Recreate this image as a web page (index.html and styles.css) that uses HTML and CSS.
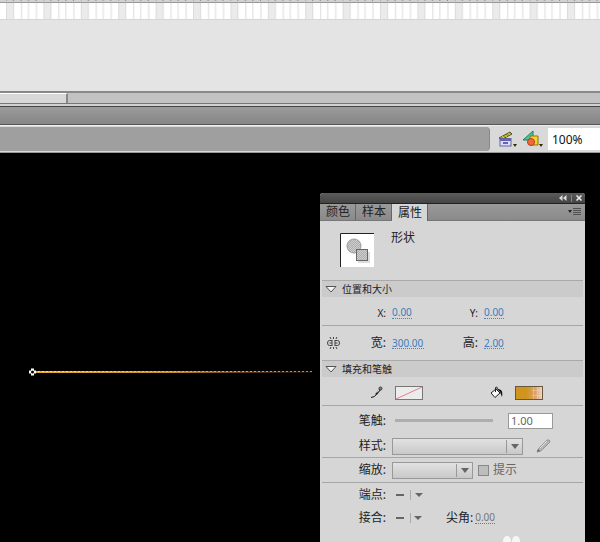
FILE: index.html
```html
<!DOCTYPE html>
<html lang="zh-CN">
<head>
<meta charset="utf-8">
<title>属性</title>
<link rel="stylesheet" href="styles.css">
</head>
<body>
<div class="timeline">
  <svg class="frames" aria-hidden="true">
    <defs>
      <pattern id="cells" width="37.4" height="20" patternUnits="userSpaceOnUse" x="6">
        <rect width="38" height="20" fill="#fff"/>
        <rect y="2" width="8" height="18" fill="#ebebeb"/>
        <path d="M.5 3v17M7.5 3v17M15.5 3v17M22.5 3v17M30.5 3v17" stroke="#dcdcdc"/>
        <rect width="38" height="2" fill="#d2d2d2"/>
        <path d="M0 0v1M7.5 0v1M15 0v1M22.5 0v1M30 0v1" stroke="#888"/>
        <path d="M0 2.5h38" stroke="#999"/>
        <path d="M0 19.5h38" stroke="#d6d6d6"/>
      </pattern>
    </defs>
    <rect width="100%" height="20" fill="url(#cells)"/>
  </svg>
</div>
<div class="scrollbar"><div class="scroll-thumb"></div></div>
<div class="titlebar"></div>
<div class="editbar">
  <div class="crumbs"></div>
  <button class="tool" aria-label="编辑场景">
    <svg width="20" height="18" viewBox="0 0 20 18">
      <path d="M1 8L12 2l2 2L3 10z" fill="#a8a82c" stroke="#55551c"/>
      <path d="M4 6l2 2M7 5l2 2M10 3l2 2" stroke="#c9c648"/>
      <rect x="2" y="8.500" width="11" height="7.500" fill="#dcdcfa" stroke="#6464a8"/>
      <path d="M2 10h11M5 13h5" stroke="#6464a8" stroke-width="2"/>
      <path d="M15 14h4l-2 3z" fill="#332b00"/>
    </svg>
  </button>
  <button class="tool" aria-label="编辑元件">
    <svg width="22" height="18" viewBox="0 0 22 18">
      <path d="M1 10L11 1v9z" fill="#45c79b" stroke="#237a68"/>
      <path d="M8 6h8v9H8z" fill="#eed62c" stroke="#8d7510"/>
      <circle cx="9" cy="12" r="3.500" fill="#f26a35" stroke="#b33d20"/>
      <path d="M17 14h4l-2 3z" fill="#332b00"/>
    </svg>
  </button>
  <input class="zoom" aria-label="缩放比例" value="100%">
</div>

<main class="stage">
  <svg class="shape" width="290" height="12" viewBox="0 0 290 12" aria-hidden="true">
    <defs>
      <linearGradient id="gold" gradientUnits="userSpaceOnUse" x1="6" y1="0" x2="286" y2="0">
        <stop offset="0" stop-color="#e8ab28"/><stop offset=".5" stop-color="#c98c28"/><stop offset="1" stop-color="#7a3a1c" stop-opacity=".2"/>
      </linearGradient>
      <linearGradient id="dots" gradientUnits="userSpaceOnUse" x1="6" y1="0" x2="286" y2="0">
        <stop offset="0" stop-color="#ffe690"/><stop offset="1" stop-color="#b58b70"/>
      </linearGradient>
    </defs>
    <rect x="6" y="5" width="279" height="2" fill="url(#gold)"/>
    <path d="M7 5.500h278" stroke="url(#dots)" stroke-dasharray="2 2"/>
    <path d="M2 6h7M5.500 2.500v7" stroke="#fff" stroke-width="3"/>
    <circle cx="5.500" cy="6" r="1.500" fill="#000"/>
  </svg>

  <section class="panel">
    <header class="panel-head">
      <button aria-label="折叠"><svg width="8" height="6" viewBox="0 0 8 6"><path d="M3.500 0v6L0 3zM7.500 0v6L4 3z" fill="#ddd"/></svg></button>
      <span class="divider"></span>
      <button aria-label="关闭"><svg width="6" height="6" viewBox="0 0 6 6"><path d="M.5.5l5 5M5.500.5l-5 5" stroke="#eee" stroke-width="1.500"/></svg></button>
    </header>
    <nav class="tabs">
      <button class="tab">颜色</button>
      <button class="tab">样本</button>
      <button class="tab active">属性</button>
      <button class="menu" aria-label="面板菜单"><svg width="13" height="8" viewBox="0 0 13 8"><path d="M0 2h4L2 5z" fill="#222"/><path d="M5 .5h8M5 2.500h8M5 4.500h8M5 6.500h8" stroke="#505050"/></svg></button>
    </nav>

    <div class="object">
      <svg class="thumb" width="34" height="34" viewBox="0 0 34 34" aria-hidden="true">
        <defs><pattern id="hatch" width="2" height="2" patternUnits="userSpaceOnUse"><rect width="2" height="2" fill="#cecece"/><path d="M0 0h1v1H0zM1 1h1v1H1z" fill="#adadad"/></pattern></defs>
        <rect width="34" height="34" fill="#fff"/>
        <path d="M.5 34V.5H34" fill="none" stroke="#222"/>
        <path d="M18 28v2h12V19h-2" fill="#ddd"/>
        <circle cx="14" cy="13" r="7" fill="url(#hatch)" stroke="#999"/>
        <rect x="16.500" y="16.500" width="11" height="11" fill="url(#hatch)" stroke="#666"/>
      </svg>
      <span>形状</span>
    </div>

    <h2 class="section"><svg width="12" height="7" viewBox="0 0 12 7"><path d="M1 .5h10L6 6z" fill="#f4f4f4" stroke="#555"/></svg>位置和大小</h2>
    <div class="row ruled values">
      <label class="name small" for="x">X:</label><input class="hot" id="x" value="0.00">
      <label class="name small" for="y">Y:</label><input class="hot" id="y" value="0.00">
    </div>
    <div class="row tall">
      <button class="link" aria-label="锁定宽高"><svg width="13" height="12" viewBox="0 0 13 12"><g fill="none" stroke="#444"><path d="M5 3.500H2.500q-2 0-2 2.500t2 2.500H5M8 3.500h2.500q2 0 2 2.500t-2 2.500H8M5 3v6M8 3v6M2.500 6H5M8 6h2.500"/><path d="M3 0l1 2M6.500 0v2M10 0L9 2M3 12l1-2M6.500 12v-2M10 12l-1-2"/></g></svg></button>
      <label class="name" for="w">宽:</label><input class="hot" id="w" value="300.00">
      <label class="name" for="h">高:</label><input class="hot" id="h" value="2.00">
    </div>

    <h2 class="section"><svg width="12" height="7" viewBox="0 0 12 7"><path d="M1 .5h10L6 6z" fill="#f4f4f4" stroke="#555"/></svg>填充和笔触</h2>
    <div class="row ruled values">
      <svg class="name-icon" width="13" height="13" viewBox="0 0 13 13" aria-hidden="true"><path d="M1 11.500q4 0 6-4" fill="none" stroke="#111"/><path d="M6 8.500l4-5" stroke="#222" stroke-width="2"/><path d="M7 6.500L9.500 3.500" stroke="#eee"/><circle cx="10.500" cy="2.500" r="1.500" fill="#888" stroke="#333"/></svg>
      <button class="swatch" aria-label="笔触颜色"><svg width="28" height="14" viewBox="0 0 28 14"><rect x=".5" y=".5" width="27" height="13" fill="#ececec" stroke="#777"/><path d="M1 13L27 1" stroke="#e2808a"/></svg></button>
      <svg class="name-icon" width="13" height="13" viewBox="0 0 13 13" aria-hidden="true"><path d="M1 7l5-4 4 4-5 4.500z" fill="#fafafa" stroke="#222"/><path d="M5.500 6V1.500q1.500-1.500 2 1" fill="none" stroke="#222"/><path d="M6 2l5 2q2 2 1 7l-2-5z" fill="#111"/></svg>
      <button class="swatch" aria-label="填充颜色"><svg width="28" height="14" viewBox="0 0 28 14">
        <defs><linearGradient id="fill"><stop offset=".4" stop-color="#cf951f"/><stop offset=".75" stop-color="#dda36e"/><stop offset="1" stop-color="#eddad6"/></linearGradient></defs>
        <rect x=".5" y=".5" width="27" height="13" fill="url(#fill)" stroke="#665838"/><path d="M17 4.500h10M17 9.500h10M18.500 1v12M22.500 1v12" stroke="#f7e4dc" opacity=".35"/></svg></button>
    </div>

    <div class="row">
      <label class="name" for="stroke">笔触:</label>
      <input class="slider" id="stroke" type="range" min="0" max="200" value="1">
      <input class="box" aria-label="笔触大小" value="1.00">
    </div>
    <div class="row ruled short">
      <label class="name" for="style">样式:</label>
      <span class="drop wide"><select id="style"><option></option></select></span>
      <button class="edit" aria-label="编辑笔触样式"><svg width="15" height="14" viewBox="0 0 15 14"><path d="M1 13l2-4 8-8q3-1 3 2l-9 9z" fill="#b3b3b3" stroke="#999"/><path d="M4 9l7-7" stroke="#e6e6e6"/><path d="M1 13l3-1-2-2z" fill="#666"/></svg></button>
    </div>
    <div class="row ruled medium">
      <label class="name" for="scale">缩放:</label>
      <span class="drop"><select id="scale"><option></option></select></span>
      <label class="hint"><input type="checkbox">提示</label>
    </div>
    <div class="row short">
      <span class="name">端点:</span>
      <button class="mini" aria-label="端点"><svg width="28" height="10" viewBox="0 0 28 10"><path d="M0 5h8" stroke="#666" stroke-width="2"/><path d="M14.500 0v10" stroke="#aaa"/><path d="M19 3h8l-4 4z" fill="#666"/></svg></button>
    </div>
    <div class="row short">
      <span class="name">接合:</span>
      <button class="mini" aria-label="接合"><svg width="28" height="10" viewBox="0 0 28 10"><path d="M0 5h8" stroke="#666" stroke-width="2"/><path d="M14.500 0v10" stroke="#aaa"/><path d="M18 3h8l-4 4z" fill="#666"/></svg></button>
      <label class="miter" for="miter">尖角:</label><input class="hot muted" id="miter" value="0.00">
    </div>
    <svg class="mark" width="20" height="10" viewBox="0 0 20 10" aria-hidden="true"><ellipse cx="5" cy="5" rx="4" ry="5" fill="#f6f6f6"/><ellipse cx="14" cy="5" rx="4" ry="5" fill="#f6f6f6"/></svg>
  </section>
</main>
</body>
</html>
```
FILE: styles.css
```css
* { box-sizing: border-box; }

body {
  margin: 0;
  height: 100vh;
  display: flex;
  flex-direction: column;
  overflow: hidden;
  background: #000;
  color: #222;
  font: 12px/16px "Noto Sans", "Noto Sans CJK SC", sans-serif;
}

button, input, select {
  margin: 0;
  padding: 0;
  border: 0;
  border-radius: 0;
  background: none;
  color: inherit;
  font: inherit;
}

svg { display: block; flex: none; }

.timeline { height: 91px; background: #e4e4e4; }
.frames { width: 100%; height: 20px; }

.scrollbar {
  height: 15px;
  border-top: 2px solid #888;
  border-bottom: 2px solid #d0d0d0;
  background: #c2c2c2;
  box-shadow: inset 0 -1px #777;
}
.scroll-thumb {
  width: 68px;
  height: 10px;
  border-top: 1px solid #fff;
  border-right: 2px solid #888;
  background: #d8d8d8;
}

.titlebar {
  height: 19px;
  border-top: 1px solid #444;
  border-bottom: 1px solid #555;
  background: linear-gradient(#9b9b9b, #868686);
}

.editbar {
  height: 28px;
  display: flex;
  align-items: center;
  padding: 1px 0;
  border-top: 1px solid #ededed;
  border-bottom: 1px solid #999;
  background: #d9d9d9;
}
.crumbs {
  flex: 1;
  align-self: stretch;
  margin-right: 8px;
  border-right: 1px solid #888;
  border-radius: 0 4px 4px 0;
  background: #9f9f9f;
}
.tool { margin-right: 4px; }
.zoom {
  width: 52px;
  height: 22px;
  padding-left: 4px;
  background: #fff;
  color: #111;
}

.stage { position: relative; flex: 1; background: #000; }
.shape { position: absolute; left: 27px; top: 213px; }

.panel {
  position: absolute;
  top: 40px;
  right: 15px;
  bottom: 0;
  width: 265px;
  overflow: hidden;
  border-radius: 3px 3px 0 0;
  background: #d6d6d6;
}

.panel-head {
  height: 11px;
  display: flex;
  align-items: center;
  justify-content: flex-end;
  gap: 4px;
  padding-right: 3px;
  border-bottom: 1px solid #222;
  background: linear-gradient(#5c5c5c, #444);
}
.divider { width: 1px; height: 7px; background: #888; }

.tabs {
  height: 17px;
  display: flex;
  border-bottom: 1px solid #777;
  background: linear-gradient(#999, #8a8a8a);
}
.tab { width: 36px; height: 16px; padding-left: 1px; border-right: 1px solid #666; }
.tab.active { height: 17px; background: #d6d6d6; }
.menu { margin: 0 4px 0 auto; }

.object { height: 59px; display: flex; gap: 17px; padding: 12px 20px; }
.object span { margin-top: -3px; }

.section {
  height: 17px;
  display: flex;
  align-items: center;
  gap: 5px;
  margin: 0 2px;
  padding-left: 3px;
  border-top: 1px solid #aaa;
  background: #cbcbcb;
  font-size: 10px;
  font-weight: 400;
}

.row {
  position: relative;
  height: 29px;
  display: flex;
  align-items: center;
  margin: 0 2px;
}
.ruled { border-bottom: 1px solid #a6a6a6; }
.values { padding-top: 3px; }
.tall { height: 34px; }
.medium { height: 25px; }
.short { height: 23px; }

.name { width: 64px; margin-right: 6px; text-align: right; white-space: nowrap; }
.small { font-size: 10px; }
.hot {
  width: 20px;
  height: 12px;
  border-bottom: 1px dotted #3d87c7;
  color: #3a80bd;
  font-size: 10px;
}
.hot + .name { width: 66px; }
#w { width: 32px; }
#w + .name { width: 54px; }
.muted { border-color: #777; color: #777; }
.link { position: absolute; left: 5px; }

.name-icon { margin-left: 48px; margin-right: 12px; }
.swatch + .name-icon { margin-left: 67px; }

.slider {
  width: 98px;
  height: 3px;
  margin-left: 3px;
  appearance: none;
  background: #aeaeae;
}
.slider::-webkit-slider-thumb { appearance: none; width: 1px; height: 3px; }
.box {
  width: 45px;
  height: 16px;
  margin-left: 15px;
  padding-left: 2px;
  border: 1px solid #999;
  background: #fff;
  color: #666;
  font-size: 11px;
}

.drop { position: relative; width: 81px; height: 17px; }
.drop.wide { width: 131px; }
.drop select {
  width: 100%;
  height: 100%;
  display: block;
  appearance: none;
  border: 1px solid #999;
  background: linear-gradient(#e2e2e2, #c8c8c8);
}
.drop::before {
  content: "";
  position: absolute;
  top: 2px;
  right: 16px;
  width: 1px;
  height: 13px;
  background: #999;
}
.drop::after {
  content: "";
  position: absolute;
  top: 6px;
  right: 4px;
  border: 4px solid transparent;
  border-top: 5px solid #666;
  border-bottom: 0;
}
.edit { margin-left: 13px; }

.hint { display: flex; align-items: center; gap: 4px; margin-left: 5px; color: #666; }
.hint input {
  width: 11px;
  height: 11px;
  appearance: none;
  border: 1px solid #888;
  background: #bdbdbd;
}

.mini { margin-left: 4px; }
.miter { margin-right: 2px; margin-left: 22px; }
.mark { margin: 7px 0 0 182px; }
```
